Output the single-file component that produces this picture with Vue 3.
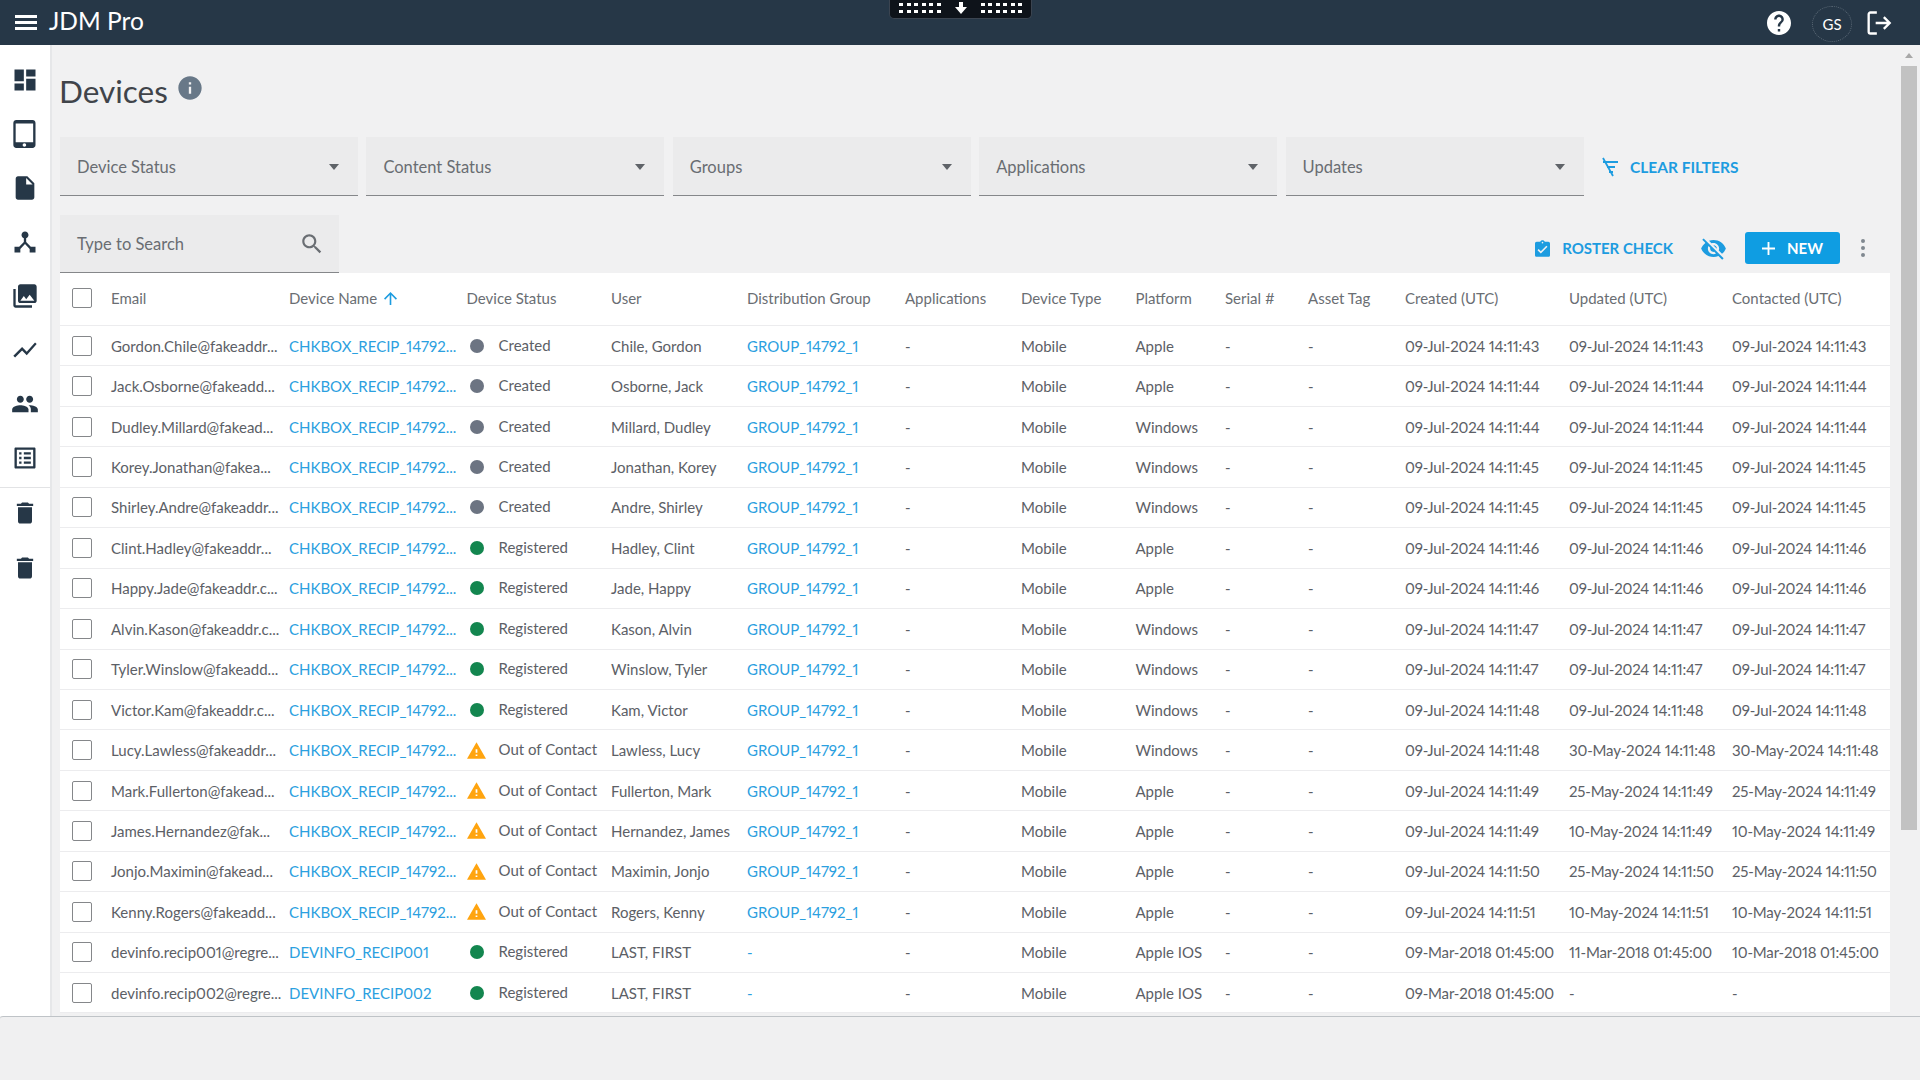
<template>
  <div class="app">
    <!-- Top bar -->
    <header class="topbar">
      <svg class="menu-icon" viewBox="0 0 22 15"><path d="M0 0h22v3H0zM0 6h22v3H0zM0 12h22v3H0z" /></svg>
      <span class="brand">JDM Pro</span>
      <div class="remote-tab">
        <span class="dots"><i v-for="n in 12" :key="n"></i></span>
        <svg class="remote-arrow" viewBox="0 0 12 12"><path d="M4 0h4v5h4l-6 7-6-7h4z" /></svg>
        <span class="dots"><i v-for="n in 12" :key="n"></i></span>
      </div>
      <div class="top-actions">
        <svg class="help-icon" viewBox="2 2 20 20"><path :d="icons.help" /></svg>
        <span class="avatar">GS</span>
        <svg class="logout-icon" viewBox="0 0 24 24">
          <path d="M11 3H5.5A1.5 1.5 0 0 0 4 4.5v15A1.5 1.5 0 0 0 5.500 21H11M10 12h12M17 7l5 5-5 5" />
        </svg>
      </div>
    </header>

    <div class="main">
      <!-- Side navigation -->
      <nav class="sidebar">
        <div class="side-group">
          <a v-for="name in navTop" :key="name" class="side-item">
            <svg viewBox="0 0 24 24"><path :d="icons[name]" /></svg>
          </a>
        </div>
        <div class="side-group second">
          <a v-for="n in 2" :key="n" class="side-item">
            <svg viewBox="0 0 24 24"><path :d="icons.trash" /></svg>
          </a>
        </div>
      </nav>

      <main class="content">
        <div class="title-row">
          <h1>Devices</h1>
          <svg class="info-icon" viewBox="0 0 24 24"><path :d="icons.info" /></svg>
        </div>

        <!-- Filters -->
        <div class="filters">
          <div v-for="f in filters" :key="f" class="filter">
            <span>{{ f }}</span>
            <i class="caret"></i>
          </div>
          <a class="clear-filters">
            <svg viewBox="0 0 20 20">
              <path d="M3 5h15M7 10h8M9 15h4M3 1l10 18" />
            </svg>
            CLEAR FILTERS
          </a>
        </div>

        <!-- Search and actions -->
        <div class="toolbar">
          <div class="search">
            <span>Type to Search</span>
            <svg viewBox="0 0 24 24"><path :d="icons.search" /></svg>
          </div>
          <div class="actions">
            <a class="roster">
              <svg viewBox="3 1 18 20"><path :d="icons.roster" /></svg>
              ROSTER CHECK
            </a>
            <svg class="eye-icon" viewBox="0 0 24 24"><path :d="icons.eyeOff" /></svg>
            <button class="new-btn">
              <svg viewBox="5 5 14 14"><path d="M19 13h-6v6h-2v-6H5v-2h6V5h2v6h6v2z" /></svg>
              NEW
            </button>
            <span class="kebab"><i></i><i></i><i></i></span>
          </div>
        </div>

        <!-- Table -->
        <div class="table">
          <div class="row head">
            <div class="cell"><span class="checkbox"></span></div>
            <div v-for="col in columns" :key="col" class="cell">
              {{ col }}
              <svg v-if="col === 'Device Name'" class="sort-icon" viewBox="4 4 16 16"><path :d="icons.arrowUp" /></svg>
            </div>
          </div>
          <div v-for="r in rows" :key="r.email" class="row">
            <div class="cell"><span class="checkbox"></span></div>
            <div class="cell">{{ r.email }}</div>
            <div class="cell link">{{ r.name }}</div>
            <div class="cell status">
              <span class="status-icon">
                <svg v-if="r.status === 'Out of Contact'" class="warn" viewBox="1 2 22 19"><path :d="icons.warning" /></svg>
                <i v-else class="dot" :class="r.status === 'Created' ? 'grey' : 'green'"></i>
              </span>
              <span class="status-text">{{ r.status }}</span>
            </div>
            <div class="cell">{{ r.user }}</div>
            <div class="cell link">{{ r.group }}</div>
            <div class="cell">-</div>
            <div class="cell">Mobile</div>
            <div class="cell">{{ r.platform }}</div>
            <div class="cell">-</div>
            <div class="cell">-</div>
            <div class="cell date">{{ r.created }}</div>
            <div class="cell date">{{ r.updated }}</div>
            <div class="cell date">{{ r.contacted }}</div>
          </div>
        </div>
      </main>

      <!-- Page scrollbar -->
      <div class="scrollbar">
        <i class="scroll-arrow"></i>
        <div class="scroll-thumb"></div>
      </div>
    </div>

    <footer class="footer"></footer>
  </div>
</template>

<script setup>
// Material icon paths
const icons = {
  dashboard: 'M3 13h8V3H3v10zm0 8h8v-6H3v6zm10 0h8V11h-8v10zm0-18v6h8V3h-8z',
  tablet: 'M18.5 0h-14C3.12 0 2 1.12 2 2.5v19C2 22.88 3.12 24 4.5 24h14c1.38 0 2.5-1.12 2.5-2.5v-19C21 1.12 19.88 0 18.5 0zm-7 23c-.83 0-1.5-.67-1.5-1.5s.67-1.5 1.5-1.5 1.5.67 1.5 1.5-.67 1.5-1.5 1.5zm7.5-4H4V3h15v16z',
  file: 'M6 2c-1.1 0-1.99.9-1.99 2L4 20c0 1.1.89 2 1.99 2H18c1.1 0 2-.9 2-2V8l-6-6H6zm7 7V3.5L18.5 9H13z',
  hub: 'M17 16l-4-4V8.82C14.16 8.4 15 7.3 15 6c0-1.66-1.34-3-3-3S9 4.34 9 6c0 1.3.84 2.4 2 2.82V12l-4 4H3v5h5v-3.05l4-4.2 4 4.2V21h5v-5h-4z',
  photos: 'M22 16V4c0-1.1-.9-2-2-2H8c-1.1 0-2 .9-2 2v12c0 1.1.9 2 2 2h12c1.1 0 2-.9 2-2zm-11-4l2.03 2.71L16 11l4 5H8l3-4zM2 6v14c0 1.1.9 2 2 2h14v-2H4V6H2z',
  chart: 'M3.5 18.49l6-6.01 4 4L22 6.92l-1.41-1.41-7.09 7.97-4-4L2 16.99z',
  people: 'M16 11c1.66 0 2.99-1.34 2.99-3S17.66 5 16 5c-1.66 0-3 1.34-3 3s1.34 3 3 3zm-8 0c1.66 0 2.99-1.34 2.99-3S9.66 5 8 5C6.34 5 5 6.34 5 8s1.34 3 3 3zm0 2c-2.33 0-7 1.17-7 3.5V19h14v-2.5c0-2.33-4.67-3.5-7-3.5zm8 0c-.29 0-.62.02-.97.05 1.16.84 1.97 1.97 1.97 3.45V19h6v-2.5c0-2.33-4.67-3.5-7-3.5z',
  list: 'M19 5v14H5V5h14m1.1-2H3.9c-.5 0-.9.4-.9.9v16.2c0 .4.4.9.9.9h16.2c.4 0 .9-.5.9-.9V3.9c0-.5-.5-.9-.9-.9zM11 7h6v2h-6V7zm0 4h6v2h-6v-2zm0 4h6v2h-6zM7 7h2v2H7zm0 4h2v2H7zm0 4h2v2H7z',
  trash: 'M6 19c0 1.1.9 2 2 2h8c1.1 0 2-.9 2-2V7H6v12zM19 4h-3.5l-1-1h-5l-1 1H5v2h14V4z',
  info: 'M12 2C6.48 2 2 6.48 2 12s4.48 10 10 10 10-4.48 10-10S17.52 2 12 2zm1 15h-2v-6h2v6zm0-8h-2V7h2v2z',
  help: 'M12 2C6.48 2 2 6.48 2 12s4.48 10 10 10 10-4.48 10-10S17.52 2 12 2zm1 17h-2v-2h2v2zm2.07-7.75l-.9.92C13.45 12.9 13 13.5 13 15h-2v-.5c0-1.1.45-2.1 1.17-2.83l1.24-1.26c.37-.36.59-.86.59-1.41 0-1.1-.9-2-2-2s-2 .9-2 2H8c0-2.21 1.79-4 4-4s4 1.79 4 4c0 .88-.36 1.68-.93 2.25z',
  search: 'M15.5 14h-.79l-.28-.27C15.41 12.59 16 11.11 16 9.5 16 5.91 13.09 3 9.5 3S3 5.91 3 9.5 5.91 16 9.5 16c1.61 0 3.09-.59 4.23-1.57l.27.28v.79l5 4.99L20.49 19l-4.99-5zm-6 0C7.01 14 5 11.99 5 9.5S7.01 5 9.5 5 14 7.01 14 9.5 11.99 14 9.5 14z',
  eyeOff: 'M12 7c2.76 0 5 2.24 5 5 0 .65-.13 1.26-.36 1.83l2.92 2.92c1.51-1.26 2.7-2.89 3.43-4.75-1.73-4.39-6-7.5-11-7.5-1.4 0-2.74.25-3.98.7l2.16 2.16C10.74 7.13 11.35 7 12 7zM2 4.27l2.28 2.28.46.46C3.08 8.3 1.78 10.02 1 12c1.73 4.39 6 7.5 11 7.5 1.55 0 3.03-.3 4.38-.84l.42.42L19.73 22 21 20.73 3.27 3 2 4.27zM7.53 9.8l1.55 1.55c-.05.21-.08.43-.08.65 0 1.66 1.34 3 3 3 .22 0 .44-.03.65-.08l1.55 1.55c-.67.33-1.41.53-2.2.53-2.76 0-5-2.24-5-5 0-.79.2-1.53.53-2.2zm4.31-.78l3.15 3.15.02-.16c0-1.66-1.34-3-3-3l-.17.01z',
  roster: 'M19 3h-4.18C14.4 1.84 13.3 1 12 1c-1.3 0-2.4.84-2.82 2H5c-1.1 0-2 .9-2 2v14c0 1.1.9 2 2 2h14c1.1 0 2-.9 2-2V5c0-1.1-.9-2-2-2zm-7 0c.55 0 1 .45 1 1s-.45 1-1 1-1-.45-1-1 .45-1 1-1zm-2 14l-4-4 1.41-1.41L10 14.17l6.59-6.59L18 9l-8 8z',
  warning: 'M1 21h22L12 2 1 21zm12-3h-2v-2h2v2zm0-4h-2v-4h2v4z',
  arrowUp: 'M4 12l1.41 1.41L11 7.83V20h2V7.83l5.58 5.59L20 12l-8-8-8 8z',
};

const navTop = ['dashboard', 'tablet', 'file', 'hub', 'photos', 'chart', 'people', 'list'];

const filters = ['Device Status', 'Content Status', 'Groups', 'Applications', 'Updates'];

const columns = [
  'Email', 'Device Name', 'Device Status', 'User', 'Distribution Group', 'Applications',
  'Device Type', 'Platform', 'Serial #', 'Asset Tag', 'Created (UTC)', 'Updated (UTC)', 'Contacted (UTC)',
];

// Regular recipients all share one naming scheme
function recip(email, user, status, platform, time, other) {
  const created = `09-Jul-2024 14:11:${time}`;
  const last = other ? `${other} 14:11:${time}` : created;
  return {
    email,
    name: 'CHKBOX_RECIP_14792...',
    status,
    user,
    group: 'GROUP_14792_1',
    platform,
    created,
    updated: last,
    contacted: last,
  };
}

const rows = [
  recip('Gordon.Chile@fakeaddr...', 'Chile, Gordon', 'Created', 'Apple', '43'),
  recip('Jack.Osborne@fakeadd...', 'Osborne, Jack', 'Created', 'Apple', '44'),
  recip('Dudley.Millard@fakead...', 'Millard, Dudley', 'Created', 'Windows', '44'),
  recip('Korey.Jonathan@fakea...', 'Jonathan, Korey', 'Created', 'Windows', '45'),
  recip('Shirley.Andre@fakeaddr...', 'Andre, Shirley', 'Created', 'Windows', '45'),
  recip('Clint.Hadley@fakeaddr...', 'Hadley, Clint', 'Registered', 'Apple', '46'),
  recip('Happy.Jade@fakeaddr.c...', 'Jade, Happy', 'Registered', 'Apple', '46'),
  recip('Alvin.Kason@fakeaddr.c...', 'Kason, Alvin', 'Registered', 'Windows', '47'),
  recip('Tyler.Winslow@fakeadd...', 'Winslow, Tyler', 'Registered', 'Windows', '47'),
  recip('Victor.Kam@fakeaddr.c...', 'Kam, Victor', 'Registered', 'Windows', '48'),
  recip('Lucy.Lawless@fakeaddr...', 'Lawless, Lucy', 'Out of Contact', 'Windows', '48', '30-May-2024'),
  recip('Mark.Fullerton@fakead...', 'Fullerton, Mark', 'Out of Contact', 'Apple', '49', '25-May-2024'),
  recip('James.Hernandez@fak...', 'Hernandez, James', 'Out of Contact', 'Apple', '49', '10-May-2024'),
  recip('Jonjo.Maximin@fakead...', 'Maximin, Jonjo', 'Out of Contact', 'Apple', '50', '25-May-2024'),
  recip('Kenny.Rogers@fakeadd...', 'Rogers, Kenny', 'Out of Contact', 'Apple', '51', '10-May-2024'),
  {
    email: 'devinfo.recip001@regre...',
    name: 'DEVINFO_RECIP001',
    status: 'Registered',
    user: 'LAST, FIRST',
    group: '-',
    platform: 'Apple IOS',
    created: '09-Mar-2018 01:45:00',
    updated: '11-Mar-2018 01:45:00',
    contacted: '10-Mar-2018 01:45:00',
  },
  {
    email: 'devinfo.recip002@regre...',
    name: 'DEVINFO_RECIP002',
    status: 'Registered',
    user: 'LAST, FIRST',
    group: '-',
    platform: 'Apple IOS',
    created: '09-Mar-2018 01:45:00',
    updated: '-',
    contacted: '-',
  },
];
</script>

<style>
html,
body {
  margin: 0;
  background: #f1f1f2;
}
</style>

<style scoped>
.app {
  height: 100vh;
  display: flex;
  flex-direction: column;
  overflow: hidden;
  font-family: Lato, "Open Sans", sans-serif;
  font-size: 15px;
  font-variant-numeric: proportional-nums;
  color: #5c6066;
}

/* Top bar */
.topbar {
  position: relative;
  flex: 0 0 45px;
  display: flex;
  align-items: center;
  padding: 0 28px 0 15px;
  background: #263747;
  color: #fff;
}

.menu-icon {
  width: 22px;
  height: 15px;
  fill: #fff;
}

.brand {
  margin-left: 12px;
  margin-bottom: 4px;
  font-size: 24.500px;
  font-weight: 400;
}

.remote-tab {
  position: absolute;
  top: 0;
  left: 889px;
  width: 143px;
  height: 19px;
  box-sizing: border-box;
  display: flex;
  align-items: center;
  justify-content: center;
  gap: 14px;
  padding-bottom: 3px;
  background: #0e131a;
  border: 1px solid #3b4450;
  border-top: 0;
  border-radius: 0 0 5px 5px;
}

.dots {
  display: grid;
  grid-template-columns: repeat(6, 4px);
  gap: 4px 3.500px;
}

.dots i {
  width: 4px;
  height: 3px;
  background: #fff;
}

.remote-arrow {
  width: 12px;
  height: 12px;
  fill: #fff;
}

.top-actions {
  margin-left: auto;
  display: flex;
  align-items: center;
}

.help-icon {
  width: 24px;
  height: 24px;
  fill: #fff;
}

.avatar {
  margin-left: 21px;
  width: 40px;
  height: 36px;
  margin-top: 2px;
  display: flex;
  align-items: center;
  justify-content: center;
  border: 1px dotted #5a6875;
  border-radius: 50%;
  box-sizing: border-box;
  font-size: 15px;
}

.logout-icon {
  margin-left: 12px;
  width: 28px;
  height: 28px;
  fill: none;
  stroke: #fff;
  stroke-width: 2;
}

.main {
  flex: 1;
  min-height: 0;
  display: flex;
}

/* Sidebar */
.sidebar {
  flex: 0 0 50px;
  padding-top: 8px;
  background: #fff;
  border-right: 2px solid #e6e7e9;
}

.side-group {
  padding-bottom: 2px;
  border-bottom: 1px solid #e2e3e5;
}

.side-group.second {
  margin-top: -3px;
  border-bottom: 0;
}

.side-item {
  display: flex;
  align-items: center;
  justify-content: center;
  height: 54px;
}

.second .side-item {
  height: 55px;
}

.side-item svg {
  width: 28px;
  height: 28px;
  fill: #263747;
}

/* Content */
.content {
  flex: 1;
  min-width: 0;
  padding-left: 8px;
  overflow: hidden;
}

.title-row {
  display: flex;
  align-items: flex-start;
  height: 92px;
  padding-top: 24px;
  box-sizing: border-box;
}

h1 {
  margin: 0 0 0 -1px;
  font-size: 31.500px;
  line-height: 44px;
  font-weight: 400;
  color: #40444a;
}

.info-icon {
  margin-left: 8px;
  margin-top: 5px;
  width: 28px;
  height: 28px;
  fill: #687888;
}

.filters {
  display: flex;
  align-items: center;
  gap: 8.400px;
}

.filter {
  flex: 0 0 298px;
  height: 59px;
  box-sizing: border-box;
  display: flex;
  align-items: center;
  justify-content: space-between;
  padding: 1px 19px 0 17px;
  background: #ebebec;
  border-bottom: 1px solid #85878a;
  color: #696d72;
  font-size: 16.500px;
}

.caret {
  width: 0;
  height: 0;
  border-left: 5px solid transparent;
  border-right: 5px solid transparent;
  border-top: 6px solid #5f6368;
}

.clear-filters {
  margin-left: 8px;
  display: flex;
  align-items: center;
  gap: 10px;
  color: #1d9ce0;
  font-weight: 700;
  font-size: 15.500px;
}

.clear-filters svg {
  width: 20px;
  height: 20px;
  fill: none;
  stroke: #1d9ce0;
  stroke-width: 1.800;
}

.toolbar {
  display: flex;
  justify-content: space-between;
  margin-top: 19px;
  height: 58px;
}

.search {
  width: 279px;
  box-sizing: border-box;
  display: flex;
  align-items: center;
  justify-content: space-between;
  padding: 0 14px 0 17px;
  background: #ebebec;
  border-bottom: 1px solid #85878a;
  color: #696d72;
  font-size: 16.500px;
}

.search svg {
  width: 26px;
  height: 26px;
  fill: #6a6e73;
}

.actions {
  display: flex;
  align-items: center;
  padding-top: 8px;
  margin-right: 34px;
}

.roster {
  display: flex;
  align-items: center;
  gap: 12px;
  color: #1d9ce0;
  font-weight: 700;
  font-size: 15px;
}

.roster svg {
  width: 15px;
  height: 17px;
  fill: #1d9ce0;
}

.eye-icon {
  margin-left: 27px;
  width: 27px;
  height: 27px;
  fill: #1d9ce0;
}

.new-btn {
  margin-left: 18px;
  width: 95px;
  height: 32px;
  display: flex;
  align-items: center;
  justify-content: center;
  gap: 12px;
  border: 0;
  border-radius: 3px;
  background: #0f9de2;
  color: #fff;
  font-family: inherit;
  font-size: 15px;
  font-weight: 700;
}

.new-btn svg {
  width: 13px;
  height: 13px;
  fill: #fff;
}

.kebab {
  margin-left: 21px;
  width: 5px;
  display: flex;
  flex-direction: column;
  gap: 3px;
}

.kebab i {
  width: 4px;
  height: 4px;
  border-radius: 50%;
  background: #808890;
}

/* Table */
.table {
  width: 1829.500px;
  background: #fff;
}

.row {
  display: grid;
  grid-template-columns: 51px 178px 177.500px 144.500px 136px 158px 116px 114.500px 89.500px 83px 97px 164px 163px 157.500px;
  align-items: center;
  height: 40.450px;
  box-sizing: border-box;
  border-bottom: 1.500px solid #ececee;
}

.row.head {
  height: 53px;
  padding-bottom: 2px;
  color: #6a6e73;
}

.cell {
  white-space: nowrap;
  overflow: visible;
}

.cell:first-child {
  padding-left: 12px;
}

.checkbox {
  display: block;
  width: 20px;
  height: 20px;
  box-sizing: border-box;
  border: 1.500px solid #85878a;
  border-radius: 2px;
  background: #fff;
}

.link {
  color: #2ba0e0;
}

.date {
  letter-spacing: -0.180px;
}

.sort-icon {
  width: 13px;
  height: 13px;
  margin-left: 3px;
  vertical-align: -1px;
  fill: #1d9ce0;
}

.status {
  display: flex;
  align-items: center;
}

.status-icon {
  width: 33px;
  margin-left: -1px;
  display: flex;
  justify-content: center;
  padding-right: 11px;
  box-sizing: border-box;
}

.status-text {
  margin-top: -2px;
}

.dot {
  width: 14px;
  height: 14px;
  border-radius: 50%;
}

.dot.grey {
  background: #6c7482;
}

.dot.green {
  background: #13864f;
}

.warn {
  width: 19px;
  height: 17px;
  fill: #ffa40f;
}

/* Scrollbar */
.scrollbar {
  flex: 0 0 20px;
  box-sizing: border-box;
  padding: 8px 3px 0 1px;
  display: flex;
  flex-direction: column;
  align-items: center;
}

.scroll-arrow {
  width: 0;
  height: 0;
  border-left: 4px solid transparent;
  border-right: 4px solid transparent;
  border-bottom: 5px solid #a8a8a8;
}

.scroll-thumb {
  margin-top: 8px;
  width: 16px;
  height: 764px;
  background: #c2c2c2;
}

.footer {
  flex: 0 0 64px;
  box-sizing: border-box;
  background: #f0f0f1;
  border-top: 1px solid #bfc3c7;
  border-top-left-radius: 3px;
}
</style>
